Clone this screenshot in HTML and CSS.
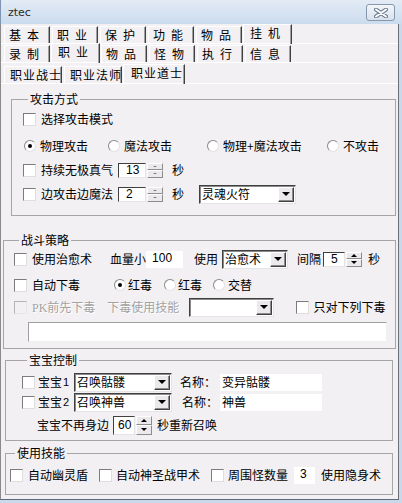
FILE: index.html
```html
<!DOCTYPE html>
<html lang="zh-CN">
<head>
    <meta charset="UTF-8">
    <title>ztec</title>
    <link rel="stylesheet" href="styles.css">
</head>
<body>

<div class="window">
    <div class="titlebar">
        <span class="title">ztec</span>
        <span class="close-btn">
            <svg width="14" height="10" viewBox="0 0 14 10">
                <path d="M2 1.5 L12 8.5 M12 1.5 L2 8.5" stroke="#6a7b92" stroke-width="4" stroke-linecap="round"/>
                <path d="M2 1.5 L12 8.5 M12 1.5 L2 8.5" stroke="#ffffff" stroke-width="2" stroke-linecap="round"/>
            </svg>
        </span>
    </div>

    <div class="client">
        <div class="tabrow row1">
            <span class="tab">基本</span>
            <span class="tab">职业</span>
            <span class="tab">保护</span>
            <span class="tab">功能</span>
            <span class="tab">物品</span>
            <span class="tab active">挂机</span>
        </div>
        <div class="tabrow row2">
            <span class="tab">录制</span>
            <span class="tab active">职业</span>
            <span class="tab">物品</span>
            <span class="tab">怪物</span>
            <span class="tab">执行</span>
            <span class="tab">信息</span>
        </div>
        <div class="tabrow row3">
            <span class="tab wide">职业战士</span>
            <span class="tab wide">职业法师</span>
            <span class="tab wide active">职业道士</span>
        </div>

        <!-- 攻击方式 -->
        <fieldset class="group g-attack">
            <legend>攻击方式</legend>
            <div class="row ra">
                <span class="chk"></span>
                <span class="lbl">选择攻击模式</span>
            </div>
            <div class="row rb">
                <span class="opt o1"><span class="radio on"></span><span class="lbl">物理攻击</span></span>
                <span class="opt o2"><span class="radio"></span><span class="lbl">魔法攻击</span></span>
                <span class="opt o3"><span class="radio"></span><span class="lbl">物理+魔法攻击</span></span>
                <span class="opt"><span class="radio"></span><span class="lbl">不攻击</span></span>
            </div>
            <div class="row rc">
                <span class="chk"></span>
                <span class="lbl w72">持续无极真气</span>
                <span class="edit e-sec">13</span>
                <span class="spin dim"><i class="up"></i><i class="dn"></i></span>
                <span class="lbl sec">秒</span>
            </div>
            <div class="row rc">
                <span class="chk"></span>
                <span class="lbl w72">边攻击边魔法</span>
                <span class="edit e-sec">2</span>
                <span class="spin dim"><i class="up"></i><i class="dn"></i></span>
                <span class="lbl sec">秒</span>
                <span class="combo c-skill"><span class="combo-text">灵魂火符</span><span class="drop"></span></span>
            </div>
        </fieldset>

        <!-- 战斗策略 -->
        <fieldset class="group g-fight">
            <legend>战斗策略</legend>
            <div class="row fa">
                <span class="chk"></span>
                <span class="lbl">使用治愈术</span>
                <span class="lbl hp">血量小</span>
                <span class="edit flat e-hp">100</span>
                <span class="lbl use">使用</span>
                <span class="combo c-heal"><span class="combo-text">治愈术</span><span class="drop"></span></span>
                <span class="lbl gap">间隔</span>
                <span class="edit e-gap">5</span>
                <span class="spin"><i class="up"></i><i class="dn"></i></span>
                <span class="lbl sec2">秒</span>
            </div>
            <div class="row fb">
                <span class="chk"></span>
                <span class="lbl">自动下毒</span>
                <span class="radio on p1"></span><span class="lbl">红毒</span>
                <span class="radio p2"></span><span class="lbl">红毒</span>
                <span class="radio p3"></span><span class="lbl">交替</span>
            </div>
            <div class="row fc">
                <span class="chk off"></span>
                <span class="lbl disabled"><span class="pk">PK</span>前先下毒</span>
                <span class="lbl disabled pskill">下毒使用技能</span>
                <span class="combo c-poison"><span class="combo-text"></span><span class="drop"></span></span>
                <span class="chk only"></span>
                <span class="lbl">只对下列下毒</span>
            </div>
            <div class="field"></div>
        </fieldset>

        <!-- 宝宝控制 -->
        <fieldset class="group g-pet">
            <legend>宝宝控制</legend>
            <div class="row pa">
                <span class="chk"></span>
                <span class="lbl pet">宝宝<small>1</small></span>
                <span class="combo c-pet"><span class="combo-text">召唤骷髅</span><span class="drop"></span></span>
                <span class="lbl name">名称：</span>
                <span class="edit flat e-name">变异骷髅</span>
            </div>
            <div class="row pb">
                <span class="chk"></span>
                <span class="lbl pet">宝宝<small>2</small></span>
                <span class="combo c-pet"><span class="combo-text">召唤神兽</span><span class="drop"></span></span>
                <span class="lbl name name2">名称：</span>
                <span class="edit flat e-name">神兽</span>
            </div>
            <div class="row pc">
                <span class="lbl away">宝宝不再身边</span>
                <span class="edit e-away">60</span>
                <span class="spin"><i class="up"></i><i class="dn"></i></span>
                <span class="lbl resum">秒重新召唤</span>
            </div>
        </fieldset>

        <!-- 使用技能 -->
        <fieldset class="group g-skill">
            <legend>使用技能</legend>
            <div class="row sa">
                <span class="chk"></span>
                <span class="lbl">自动幽灵盾</span>
                <span class="chk s2"></span>
                <span class="lbl">自动神圣战甲术</span>
                <span class="chk s3"></span>
                <span class="lbl">周围怪数量</span>
                <span class="edit flat e-count">3</span>
                <span class="lbl hide">使用隐身术</span>
            </div>
        </fieldset>
    </div>
</div>

</body>
</html>
```

FILE: styles.css
```css
* {
    box-sizing: border-box;
}

body {
    margin: 0;
    background: #c9d8ea;
    font-family: "Noto Sans CJK SC", sans-serif;
    font-size: 12px;
    color: #000;
}

.window {
    width: 402px;
    height: 503px;
    background: #c9d8ea;
    overflow: hidden;
}

.titlebar {
    height: 24px;
    display: flex;
    align-items: center;
    justify-content: space-between;
    padding: 0 7px 0 7px;
    background: linear-gradient(#e3ebf5, #cbdcef);
    border-left: 1px solid #7f95b2;
}

.title {
    font-family: "DejaVu Sans", sans-serif;
    font-size: 11px;
    color: #2b2b2b;
}

.close-btn {
    width: 29px;
    height: 17px;
    margin-top: 1px;
    border: 1px solid #8797ad;
    border-radius: 3px;
    background: linear-gradient(#f3f6fa, #d8e1ec);
    display: flex;
    align-items: center;
    justify-content: center;
}

.client {
    height: 476px;
    margin-right: 3px;
    background: #f3f0f3;
    border-left: 1px solid #8a8a8a;
    border-right: 1px solid #6b6f78;
    border-bottom: 1px solid #5f6878;
}

/* tabs */
.tabrow {
    display: flex;
    align-items: flex-end;
    padding-left: 3px;
    border-bottom: 1px solid #fff;
}

.row1 {
    height: 20px;
}

.row2 {
    height: 19px;
}

.row3 {
    height: 21px;
}

.tab {
    width: 46px;
    height: 17px;
    margin-right: 2px;
    padding-left: 4px;
    line-height: 16px;
    letter-spacing: 6px;
    border-top: 1px solid #fff;
    border-left: 1px solid #fff;
    border-right: 1px solid #404040;
    box-shadow: inset -1px 0 0 #a0a0a0;
    white-space: nowrap;
}

.tab.wide {
    width: 58px;
    letter-spacing: 1px;
    padding-left: 5px;
}

.tab.active {
    height: 20px;
    margin-left: -1px;
    margin-right: 1px;
    width: 49px;
    line-height: 15px;
    padding-left: 6px;
    margin-bottom: -1px;
    position: relative;
}

.tab.wide.active {
    width: 62px;
    padding-left: 7px;
}

/* group boxes */
.group {
    margin: 0;
    padding: 0;
    border: 1px solid #a6a6a6;
    min-width: 0;
}

.group legend {
    margin-left: 5px;
    padding: 0 2px;
    line-height: 14px;
    height: 14px;
}

.g-attack {
    margin: 8px 0 0 10px;
    width: 385px;
    padding: 3px 0 11px 11px;
}

.g-fight {
    margin: 17px 0 0 2px;
    width: 393px;
    padding: 2px 0 6px 10px;
}

.g-pet {
    margin: 4px 0 0 4px;
    width: 388px;
    padding: 5px 0 5px 16px;
}

.g-skill {
    margin: 5px 0 0 4px;
    width: 388px;
    padding: 5px 0 9px 4px;
}

.row {
    display: flex;
    align-items: center;
    height: 20px;
    white-space: nowrap;
}

.lbl {
    line-height: 14px;
}

/* controls */
.chk {
    width: 13px;
    height: 13px;
    margin-right: 5px;
    flex: none;
    background: #fff;
    border: 1px solid;
    border-color: #7c7c7c #dedede #dedede #7c7c7c;
}

.chk.off {
    background: #f3f0f3;
    border-color: #b4b4b4 #e6e6e6 #e6e6e6 #b4b4b4;
}

.radio {
    width: 12px;
    height: 12px;
    flex: none;
    margin-right: 4px;
    border-radius: 50%;
    background: #fff;
    border: 1px solid;
    border-color: #8a8a8a #e2e2e2 #e2e2e2 #8a8a8a;
    display: flex;
    align-items: center;
    justify-content: center;
}

.radio.on::after {
    content: "";
    width: 4px;
    height: 4px;
    border-radius: 50%;
    background: #000;
}

.edit {
    height: 15px;
    flex: none;
    background: #fff;
    border: 1px solid;
    border-color: #404040 #e4e4e4 #e4e4e4 #404040;
    font-family: "Liberation Sans", sans-serif;
    font-size: 12px;
    line-height: 13px;
    padding-left: 5px;
}

.edit.flat {
    border: none;
    line-height: 15px;
}

.spin {
    width: 16px;
    height: 15px;
    margin-left: 1px;
    flex: none;
    display: flex;
    flex-direction: column;
}

.spin i {
    flex: 1;
    background: #ece9ec;
    border: 1px solid;
    border-color: #fff #8c8c8c #8c8c8c #fff;
    display: flex;
    align-items: center;
    justify-content: center;
}

.spin .up::after {
    content: "";
    border: 3px solid transparent;
    border-top: none;
    border-bottom: 3px solid #000;
}

.spin .dn::after {
    content: "";
    border: 3px solid transparent;
    border-bottom: none;
    border-top: 3px solid #000;
}

.spin.dim .up::after {
    border-width: 0 2px 1px;
    border-bottom-color: #555;
}

.spin.dim .dn::after {
    border-width: 1px 2px 0;
    border-top-color: #555;
}

.combo {
    height: 19px;
    flex: none;
    display: flex;
    align-items: center;
    background: #fff;
    border: 1px solid;
    border-color: #404040 #e4e4e4 #e4e4e4 #404040;
    box-shadow: inset 1px 1px 0 #8a8a8a;
    padding: 1px 1px 1px 2px;
}

.combo-text {
    flex: 1;
    line-height: 14px;
}

.drop {
    width: 16px;
    height: 15px;
    background: #ece9ec;
    border: 1px solid;
    border-color: #fff #404040 #404040 #fff;
    box-shadow: inset -1px -1px 0 #8c8c8c;
    display: flex;
    align-items: center;
    justify-content: center;
}

.drop::after {
    content: "";
    border: 4px solid transparent;
    border-bottom: none;
    border-top: 4px solid #000;
}

/* attack group */
.rb {
    margin-top: 7px;
    padding-left: 1px;
}

.rc {
    margin-top: 4px;
}

.opt {
    display: flex;
    align-items: center;
}

.o1 {
    width: 84px;
}

.o2 {
    width: 99px;
}

.o3 {
    width: 120px;
}

.w72 {
    width: 72px;
}

.e-sec {
    width: 28px;
    margin-left: 5px;
    padding-left: 7px;
}

.sec {
    margin-left: 9px;
}

.c-skill {
    width: 97px;
    margin-left: 15px;
}

/* fight group */
.fb {
    margin-top: 6px;
}

.fc {
    margin-top: 2px;
}

.hp {
    margin-left: 18px;
}

.e-hp {
    width: 37px;
    height: 17px;
    padding-left: 6px;
}

.use {
    margin-left: 11px;
}

.c-heal {
    width: 66px;
    margin-left: 4px;
}

.gap {
    margin-left: 9px;
}

.e-gap {
    width: 22px;
    margin-left: 2px;
    padding-left: 7px;
}

.sec2 {
    margin-left: 6px;
}

.p1 {
    margin-left: 34px;
    margin-right: 2px;
}

.p2 {
    margin-left: 12px;
    margin-right: 2px;
}

.p3 {
    margin-left: 11px;
    margin-right: 3px;
}

.disabled {
    color: #a2a2a2;
    text-shadow: 1px 1px 0 #fff;
}

.pk {
    font-family: "Liberation Serif", serif;
    font-size: 12px;
}

.pskill {
    margin-left: 12px;
}

.c-poison {
    width: 85px;
    margin-left: 10px;
}

.only {
    margin-left: 22px;
    margin-right: 4px;
}

.field {
    width: 359px;
    height: 20px;
    margin: 5px 0 0 14px;
    background: #fff;
    border: 1px solid;
    border-color: #a0a0a0 #f0f0f0 #f0f0f0 #a0a0a0;
}

/* pet group */
.chk + .pet {
    margin-left: -2px;
}

.pet {
    width: 36px;
}

.pet small {
    font-family: "Liberation Sans", sans-serif;
    font-size: 11px;
    vertical-align: 1px;
    margin-left: 1px;
}

.c-pet {
    width: 98px;
    margin-left: 0;
}

.name {
    margin-left: 8px;
    width: 40px;
}

.name2 {
    margin-left: 10px;
    width: 38px;
}

.e-name {
    width: 102px;
    height: 17px;
    padding-left: 2px;
    font-family: "Noto Sans CJK SC", sans-serif;
    line-height: 16px;
}

.pa {
    margin-top: 0;
}

.pc {
    margin-top: 3px;
}

.away {
    margin-left: 15px;
}

.e-away {
    width: 22px;
    height: 19px;
    margin-left: 4px;
    padding-left: 4px;
    line-height: 17px;
}

.pc .spin {
    height: 19px;
}

.resum {
    margin-left: 5px;
}

/* skill group */
.s2,
.s3 {
    margin-left: 11px;
    margin-right: 4px;
}

.s3 {
    margin-right: 4px;
}

.e-count {
    width: 21px;
    height: 17px;
    margin-left: 6px;
    padding-left: 6px;
}

.hide {
    margin-left: 6px;
}
```
